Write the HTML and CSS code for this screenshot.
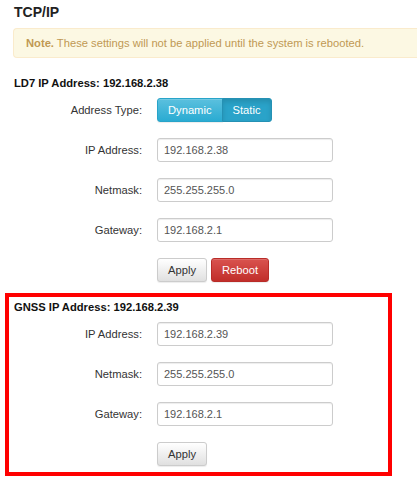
FILE: index.html
```html
<!DOCTYPE html>
<html>
<head>
<meta charset="utf-8">
<title>TCP/IP</title>
<link rel="stylesheet" href="styles.css">
</head>
<body>
<div class="page">
  <h3 class="title">TCP/IP</h3>
  <div class="alert"><strong>Note.</strong> These settings will not be applied until the system is rebooted.</div>

  <section class="block">
    <h4 class="block-title">LD7 IP Address: 192.168.2.38</h4>
    <div class="form">
      <label class="lbl">Address Type:</label>
      <div class="ctl">
        <div class="btn-group">
          <button class="btn btn-info">Dynamic</button>
          <button class="btn btn-info active">Static</button>
        </div>
      </div>
      <label class="lbl">IP Address:</label>
      <div class="ctl"><input class="input" type="text" value="192.168.2.38"></div>
      <label class="lbl">Netmask:</label>
      <div class="ctl"><input class="input" type="text" value="255.255.255.0"></div>
      <label class="lbl">Gateway:</label>
      <div class="ctl"><input class="input" type="text" value="192.168.2.1"></div>
      <span class="lbl"></span>
      <div class="ctl actions">
        <button class="btn btn-default">Apply</button>
        <button class="btn btn-danger">Reboot</button>
      </div>
    </div>
  </section>

  <section class="block highlight">
    <h4 class="block-title">GNSS IP Address: 192.168.2.39</h4>
    <div class="form">
      <label class="lbl">IP Address:</label>
      <div class="ctl"><input class="input" type="text" value="192.168.2.39"></div>
      <label class="lbl">Netmask:</label>
      <div class="ctl"><input class="input" type="text" value="255.255.255.0"></div>
      <label class="lbl">Gateway:</label>
      <div class="ctl"><input class="input" type="text" value="192.168.2.1"></div>
      <span class="lbl"></span>
      <div class="ctl actions">
        <button class="btn btn-default">Apply</button>
      </div>
    </div>
  </section>
</div>
</body>
</html>
```

FILE: styles.css
```css
html, body {
  margin: 0;
  padding: 0;
  background: #fff;
}
body {
  font-family: "Liberation Sans", Arial, sans-serif;
  font-size: 11.2px;
  line-height: 16px;
  color: #333;
}
.page {
  padding: 4px 0 0 14px;
}
.title {
  margin: 0;
  font-size: 14px;
  line-height: 16px;
  font-weight: bold;
  color: #222;
}
.alert {
  margin: 8px 0 0 -1px;
  padding: 6px 12px;
  line-height: 16px;
  background: #fcf8e3;
  border: 1px solid #faebcc;
  border-right: none;
  border-radius: 4px 0 0 4px;
  color: #c09853;
}
.alert strong {
  font-weight: bold;
}
.block {
  margin-top: 17px;
}
.block-title {
  margin: 0 0 7px;
  font-size: 11.2px;
  line-height: 16px;
  font-weight: bold;
  color: #111;
}
.form {
  display: grid;
  grid-template-columns: 128px 176px;
  column-gap: 15px;
  row-gap: 16px;
  align-items: center;
}
.lbl {
  text-align: right;
  color: #333;
  font-size: 11.2px;
  line-height: 16px;
}
.ctl {
  display: flex;
  align-items: center;
}
.input {
  box-sizing: border-box;
  width: 176px;
  height: 24px;
  margin: 0;
  padding: 0 6px;
  font-family: "Liberation Sans", Arial, sans-serif;
  font-size: 11px;
  color: #555;
  background: #fff;
  border: 1px solid #ccc;
  border-radius: 3px;
  box-shadow: inset 0 1px 1px rgba(0,0,0,0.075);
  outline: none;
}
.btn {
  box-sizing: border-box;
  height: 24px;
  margin: 0;
  padding: 0 10px;
  font-family: "Liberation Sans", Arial, sans-serif;
  font-size: 11.2px;
  line-height: 22px;
  border: 1px solid transparent;
  border-radius: 3px;
  cursor: pointer;
}
.btn-group {
  display: flex;
}
.btn-group .btn {
  border-radius: 0;
}
.btn-group .btn:first-child {
  border-radius: 3px 0 0 3px;
}
.btn-group .btn:last-child {
  border-radius: 0 3px 3px 0;
  margin-left: -1px;
}
.btn-info {
  color: #fff;
  background-image: linear-gradient(to bottom, #5bc0de 0%, #2aabd2 100%);
  border-color: #28a4c9;
  box-shadow: inset 0 1px 0 rgba(255,255,255,0.15), 0 1px 1px rgba(0,0,0,0.075);
}
.btn-info.active {
  background-image: none;
  background-color: #2aa3c9;
  border-color: #2591b4;
  box-shadow: inset 0 3px 5px rgba(0,0,0,0.125);
}
.btn-default {
  color: #333;
  background-image: linear-gradient(to bottom, #fff 0%, #e0e0e0 100%);
  border-color: #ccc;
  box-shadow: inset 0 1px 0 rgba(255,255,255,0.15), 0 1px 1px rgba(0,0,0,0.075);
}
.btn-danger {
  color: #fff;
  background-image: linear-gradient(to bottom, #d9534f 0%, #c12e2a 100%);
  border-color: #b92c28;
  box-shadow: inset 0 1px 0 rgba(255,255,255,0.15), 0 1px 1px rgba(0,0,0,0.075);
}
.actions {
  gap: 4px;
}
.highlight {
  box-sizing: border-box;
  width: 387px;
  margin: 11px 0 0 -9px;
  padding: 2px 0 6px 5px;
  border: 4px solid #ff0000;
}
```
